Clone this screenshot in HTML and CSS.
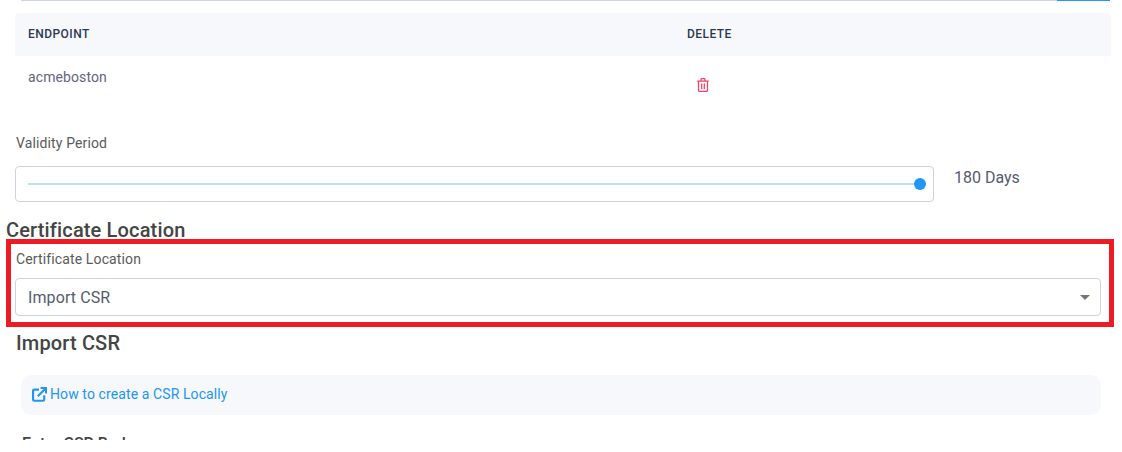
FILE: index.html
```html
<!DOCTYPE html>
<html lang="en">
<head>
  <meta charset="UTF-8">
  <title>Certificate</title>
  <link rel="stylesheet" href="styles.css">
</head>
<body>
  <div class="page">
    <div class="tab-line">
      <div class="tab-line-active"></div>
    </div>

    <div class="table-head">
      <div class="col-endpoint">Endpoint</div>
      <div class="col-delete">Delete</div>
    </div>
    <div class="table-row">
      <div class="col-endpoint">acmeboston</div>
      <div class="col-delete">
        <svg class="trash" width="14" height="14" viewBox="0 0 14 14" fill="none" stroke="#f5405f" stroke-width="1.25">
          <path d="M1.2 3h11.6M2.5 3v9.4q0 1 1 1h7q1 0 1-1V3M5 3V1.4q0-.8.8-.8h2.4q.8 0 .8.8V3M5.7 5.6v5.4M8.3 5.6v5.4"/>
        </svg>
      </div>
    </div>

    <div class="field-label validity-label">Validity Period</div>
    <div class="slider-row">
      <div class="slider-box">
        <div class="slider-track"><span class="slider-thumb"></span></div>
      </div>
      <div class="slider-value">180 Days</div>
    </div>

    <h2 class="location-title">Certificate Location</h2>
    <div class="field-label location-label">Certificate Location</div>
    <div class="select-box">
      <span>Import CSR</span>
      <span class="select-arrow"></span>
    </div>

    <h2 class="import-title">Import CSR</h2>
    <div class="callout">
      <svg class="link-icon" width="15" height="15" viewBox="0 0 14 14" fill="none" stroke="#2196f3" stroke-width="2">
        <path d="M6.5 2.4H2.2q-1.2 0-1.2 1.2v8q0 1.2 1.2 1.2h8q1.2 0 1.2-1.2V7.6M5.4 8.6 12.4 1.6M8 .9h5.1V6"/>
      </svg>
      <a class="callout-link" href="#">How to create a CSR Locally</a>
    </div>
    <div class="csr-label">Enter CSR Body</div>

    <div class="highlight"></div>
  </div>
</body>
</html>
```

FILE: styles.css
```css
body {
  margin: 0;
  background-color: #fff;
  font-family: Roboto, "Liberation Sans", sans-serif;
  color: #4a4a4a;
}

.page {
  position: relative;
  height: 440px;
  overflow: hidden;
}

.tab-line {
  display: flex;
  justify-content: flex-end;
  height: 1px;
  margin: 0 12px 0 21px;
  background-color: #cdd3de;
}

.tab-line-active {
  width: 53px;
  background-color: #2196f3;
}

.table-head {
  display: flex;
  align-items: center;
  box-sizing: border-box;
  height: 43px;
  margin: 12px 11px 0 15px;
  padding-bottom: 2px;
  border-radius: 4px 4px 0 0;
  background-color: #f7f8fc;
  font-size: 12px;
  font-weight: 500;
  letter-spacing: 0.45px;
  text-transform: uppercase;
  color: #2c3850;
}

.col-endpoint {
  width: 659px;
  padding-left: 13px;
}

.table-row {
  display: flex;
  height: 58px;
  margin: 0 11px 0 15px;
  font-size: 14px;
  letter-spacing: 0.1px;
  color: #5f6580;
}

.table-row .col-endpoint {
  padding-top: 13px;
}

.table-row .col-delete {
  padding: 22px 0 0 9px;
}

.trash {
  display: block;
}

.field-label {
  font-size: 14px;
  letter-spacing: 0.13px;
  line-height: 20px;
  color: #5a5a5a;
  margin-left: 16px;
}

.validity-label {
  margin-top: 19px;
}

.slider-row {
  display: flex;
  margin: 13px 0 0 15px;
}

.slider-box {
  box-sizing: border-box;
  display: flex;
  align-items: center;
  width: 919px;
  height: 36px;
  padding: 0 13px 0 12px;
  border: 1px solid #cdd3de;
  border-radius: 4px;
}

.slider-track {
  position: relative;
  flex: 1;
  height: 2px;
  background-color: #bbdefb;
}

.slider-thumb {
  position: absolute;
  right: -6px;
  top: -5px;
  width: 12px;
  height: 12px;
  border-radius: 50%;
  background-color: #2196f3;
}

.slider-value {
  margin-left: 20px;
  padding-top: 1px;
  font-size: 16px;
  line-height: 22px;
  color: #555b6e;
}

h2 {
  margin: 0;
  font-size: 20px;
  font-weight: 500;
  letter-spacing: 0.15px;
  line-height: 24px;
  color: #444;
}

.location-title {
  margin: 16px 0 0 6px;
}

.location-label {
  margin-top: 7px;
}

.select-box {
  box-sizing: border-box;
  display: flex;
  align-items: center;
  justify-content: space-between;
  width: 1086px;
  height: 38px;
  margin: 9px 0 0 15px;
  padding: 0 10px 0 12px;
  border: 1px solid #cdd3de;
  border-radius: 4px;
  font-size: 16px;
  letter-spacing: 0.1px;
  color: #555b6e;
}

.select-arrow {
  width: 0;
  height: 0;
  border-left: 5px solid transparent;
  border-right: 5px solid transparent;
  border-top: 5px solid #757575;
}

.import-title {
  margin: 15px 0 0 16px;
}

.callout {
  box-sizing: border-box;
  display: flex;
  align-items: center;
  gap: 3px;
  width: 1080px;
  height: 40px;
  margin: 20px 0 0 21px;
  padding-left: 11px;
  border-radius: 10px;
  background-color: #f7f8fc;
}

.link-icon {
  margin-top: -1px;
}

.callout-link {
  margin-top: -2px;
  font-size: 14px;
  letter-spacing: 0.1px;
  color: #2196f3;
  text-decoration: none;
}

.csr-label {
  margin: 19px 0 0 22px;
  font-size: 16px;
  font-weight: 500;
  line-height: 20px;
  color: #444;
}

/* red annotation drawn over the form */
.highlight {
  position: absolute;
  left: 6px;
  top: 239px;
  width: 1098px;
  height: 78px;
  border: 5px solid #ed1c24;
}
```
